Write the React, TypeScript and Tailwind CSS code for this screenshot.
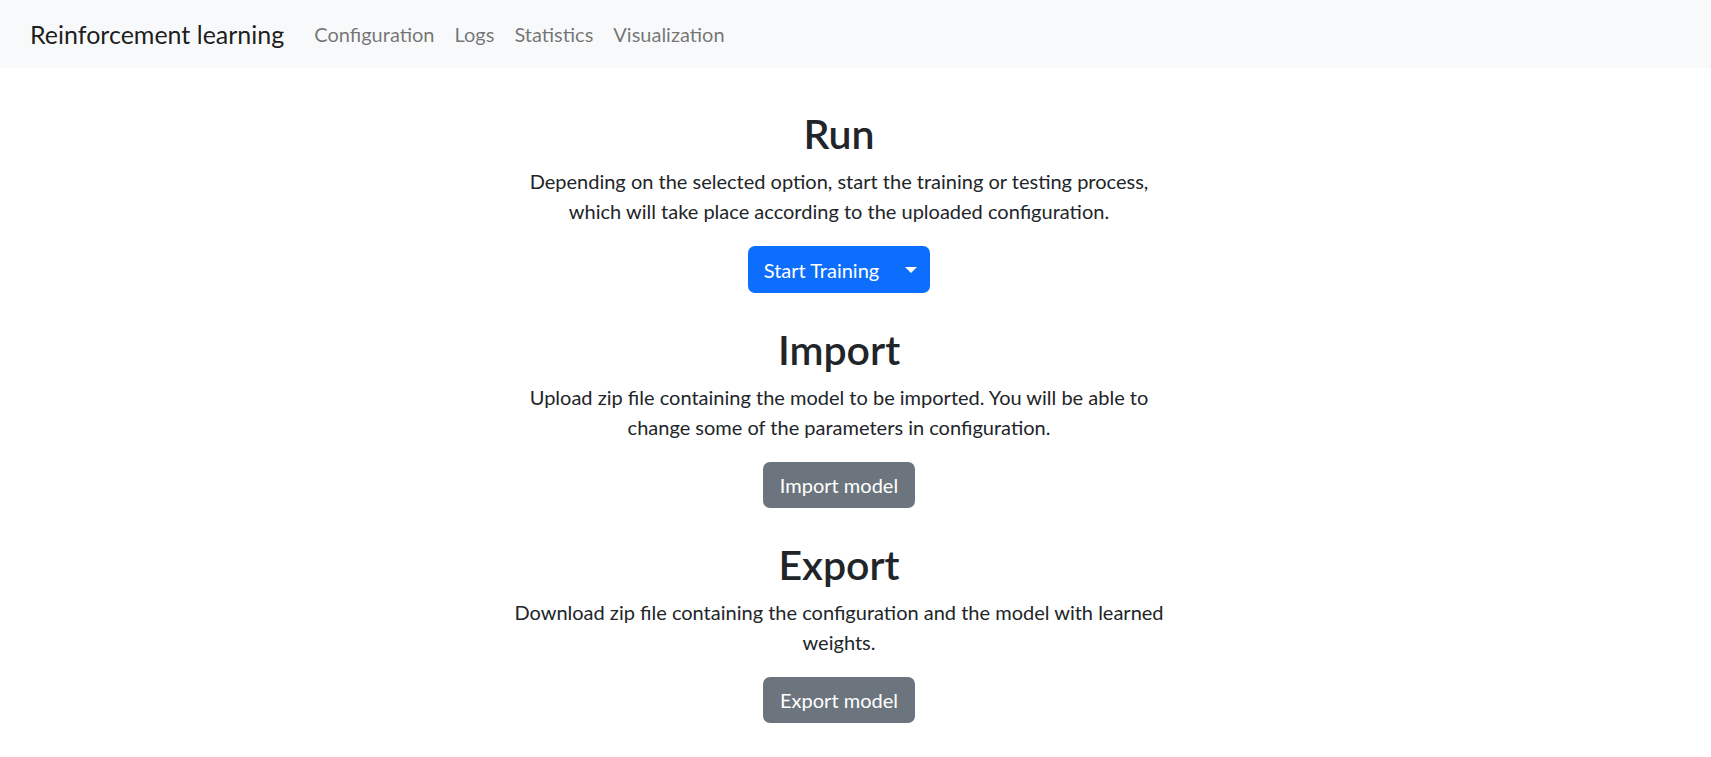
import React from "react";

const font = { fontFamily: "Lato, 'Noto Sans', 'Liberation Sans', sans-serif" };

function Section({
  title,
  lines,
  button,
}: {
  title: string;
  lines: string[];
  button: React.ReactNode;
}) {
  return (
    <section className="flex flex-col items-center text-center">
      <h2 className="text-[41px] leading-[48px] font-semibold text-[#212529] mb-[8px]">{title}</h2>
      <p className="text-[20px] leading-[30px] text-[#212529] mb-[20px] w-[720px]">
        {lines.map((l, i) => (
          <React.Fragment key={i}>
            {l}
            {i < lines.length - 1 && <br />}
          </React.Fragment>
        ))}
      </p>
      {button}
    </section>
  );
}

export default function App() {
  return (
    <div className="min-h-[757px] bg-white" style={font}>
      <nav className="h-[68px] bg-[#f8f9fa] flex items-center pl-[30px]">
        <span className="text-[25px] leading-[30px] text-[rgba(0,0,0,0.9)] mr-[20px]">
          Reinforcement learning
        </span>
        <div className="flex items-center">
          {["Configuration", "Logs", "Statistics", "Visualization"].map((l) => (
            <a key={l} className="px-[10px] text-[20px] leading-[30px] text-[rgba(0,0,0,0.55)]">
              {l}
            </a>
          ))}
        </div>
      </nav>
      <main className="pt-[42px] pr-[33px] flex flex-col items-center gap-[33px]">
        <Section
          title="Run"
          lines={[
            "Depending on the selected option, start the training or testing process,",
            "which will take place according to the uploaded configuration.",
          ]}
          button={
            <button className="h-[47px] bg-[#0d6efd] text-white rounded-[7px] flex items-center text-[20px] pl-[16px] pr-[13px]">
              <span>Start Training</span>
              <span className="ml-[26px] w-0 h-0 border-l-[6px] border-r-[6px] border-t-[6px] border-l-transparent border-r-transparent border-t-white" />
            </button>
          }
        />
        <Section
          title="Import"
          lines={[
            "Upload zip file containing the model to be imported. You will be able to",
            "change some of the parameters in configuration.",
          ]}
          button={
            <button className="h-[46px] bg-[#6c757d] text-white rounded-[7px] flex items-center text-[20px] px-[17px]">
              Import model
            </button>
          }
        />
        <Section
          title="Export"
          lines={[
            "Download zip file containing the configuration and the model with learned",
            "weights.",
          ]}
          button={
            <button className="h-[46px] bg-[#6c757d] text-white rounded-[7px] flex items-center text-[20px] px-[17px]">
              Export model
            </button>
          }
        />
      </main>
    </div>
  );
}
